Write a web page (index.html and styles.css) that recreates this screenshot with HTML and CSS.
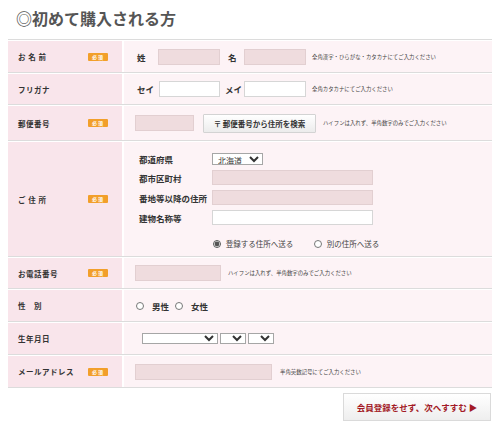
FILE: index.html
```html
<!DOCTYPE html>
<html lang="ja">
<head>
<meta charset="utf-8">
<link rel="stylesheet" href="styles.css">
</head>
<body>
<div class="page">
  <h1 class="title">◎初めて購入される方</h1>
  <div class="form">
    <div class="row h31">
      <div class="lab"><span class="lt">お 名 前</span><span class="req">必須</span></div>
      <div class="val">
        <span class="fl fa">姓</span><input class="inp pink w62" type="text">
        <span class="fl fb">名</span><input class="inp pink w62" type="text">
        <span class="note n6">全角漢字・ひらがな・カタカナにてご入力ください</span>
      </div>
    </div>
    <div class="row h30">
      <div class="lab"><span class="lt">フリガナ</span></div>
      <div class="val">
        <span class="fl fc">セイ</span><input class="inp white w61" type="text">
        <span class="fl fd">メイ</span><input class="inp white w62" type="text">
        <span class="note n6">全角カタカナにてご入力ください</span>
      </div>
    </div>
    <div class="row h34">
      <div class="lab"><span class="lt">郵便番号</span><span class="req">必須</span></div>
      <div class="val">
        <input class="inp pink w59" type="text">
        <button class="zip" type="button">〒 郵便番号から住所を検索</button>
        <span class="note n7">ハイフンは入れず、半角数字のみでご入力ください</span>
      </div>
    </div>
    <div class="row h114">
      <div class="lab"><span class="lt">ご 住 所</span><span class="req">必須</span></div>
      <div class="val addr">
        <div class="agrid">
          <span class="al">都道府県</span>
          <select class="sel pref"><option>北海道</option></select>
          <span class="al">都市区町村</span>
          <input class="inp pink w161" type="text">
          <span class="al">番地等以降の住所</span>
          <input class="inp pink w161" type="text">
          <span class="al">建物名称等</span>
          <input class="inp white w161" type="text">
          <span></span>
          <div class="send">
            <label class="rl"><input type="radio" name="send" checked> 登録する住所へ送る</label>
            <label class="rl rl2"><input type="radio" name="send"> 別の住所へ送る</label>
          </div>
        </div>
      </div>
    </div>
    <div class="row h30">
      <div class="lab"><span class="lt">お電話番号</span><span class="req">必須</span></div>
      <div class="val">
        <input class="inp pink w86" type="text">
        <span class="note n7">ハイフンは入れず、半角数字のみでご入力ください</span>
      </div>
    </div>
    <div class="row h31">
      <div class="lab"><span class="lt">性　別</span></div>
      <div class="val gender">
        <label class="gl"><input type="radio" name="sex">男性</label>
        <label class="gl gl2"><input type="radio" name="sex">女性</label>
      </div>
    </div>
    <div class="row h31">
      <div class="lab"><span class="lt">生年月日</span></div>
      <div class="val birth">
        <select class="sel y"><option></option></select>
        <select class="sel md"><option></option></select>
        <select class="sel md"><option></option></select>
      </div>
    </div>
    <div class="row h31">
      <div class="lab"><span class="lt">メールアドレス</span><span class="req">必須</span></div>
      <div class="val">
        <input class="inp pink w137" type="text">
        <span class="note n8">半角英数記号にてご入力ください</span>
      </div>
    </div>
  </div>
  <div class="actions">
    <button class="next" type="button">会員登録をせず、次へすすむ ▶</button>
  </div>
</div>
</body>
</html>
```

FILE: styles.css
```css
* { box-sizing: border-box; }
body {
  margin: 0;
  background: #fff;
  color: #333;
  font-family: "Noto Sans CJK JP", "Noto Sans", sans-serif;
}
.page { padding: 8px; }
.title {
  margin: 0 0 11px 8px;
  font-size: 16px;
  line-height: 20px;
  font-weight: bold;
  color: #555;
}
.form { border-top: 1px solid #dcdcdc; }
.row {
  display: grid;
  grid-template-columns: 114px 1fr;
  column-gap: 2px;
  padding-top: 1px;
  border-bottom: 1px solid #dcdcdc;
}
.h30 { height: 32px; }
.h31 { height: 33px; }
.h34 { height: 36px; }
.h114 { height: 116px; }
.lab {
  background: #f9e5eb;
  display: flex;
  align-items: center;
  padding-left: 10px;
}
.lt {
  width: 70px;
  font-size: 7.5px;
  font-weight: bold;
  letter-spacing: 0.5px;
  color: #333;
  white-space: pre;
}
.req {
  width: 20px;
  height: 8px;
  background: #f29f2a;
  color: #fff;
  font-size: 5px;
  line-height: 8px;
  font-weight: bold;
  text-align: center;
  letter-spacing: 1px;
  border-radius: 1px;
}
.val {
  background: #fdf3f6;
  display: flex;
  align-items: center;
  padding-left: 11px;
}
.fl {
  font-size: 8.5px;
  font-weight: bold;
  color: #333;
}
.fa { margin-left: 2px; width: 21px; }
.fb { margin-left: 8px; width: 16px; }
.fc { margin-left: 2px; width: 22px; }
.fd { margin-left: 5px; width: 19px; }
.inp {
  height: 16px;
  border: 1px solid #e2cfd1;
  padding: 0;
  margin: 0;
  font-size: 8px;
}
.pink { background: #efdcde; }
.white { background: #fff; border-color: #d6d6d6; }
.w59 { width: 59px; }
.w61 { width: 61px; }
.w62 { width: 62px; }
.w86 { width: 86px; }
.w137 { width: 137px; }
.w161 { width: 161px; height: 15px; }
.note {
  font-size: 5.4px;
  color: #444;
  white-space: nowrap;
}
.n6 { margin-left: 6px; }
.n7 { margin-left: 7px; }
.n8 { margin-left: 8px; }
.zip {
  margin: 0 0 0 9px;
  width: 113px;
  height: 19px;
  padding: 0;
  border: 1px solid #d3d3d3;
  border-radius: 1px;
  background: linear-gradient(#ffffff, #ececec);
  font-family: inherit;
  font-size: 7.5px;
  font-weight: bold;
  color: #333;
}
.addr {
  align-items: flex-start;
  padding: 11px 0 0 15px;
}
.agrid {
  display: grid;
  grid-template-columns: 73px auto;
  row-gap: 5px;
  align-items: center;
}
.al {
  font-size: 8.5px;
  font-weight: bold;
  color: #333;
  white-space: nowrap;
}
.sel {
  height: 12px;
  padding: 0 0 0 1px;
  margin: 0;
  border: 1px solid #a6a6a6;
  border-radius: 0;
  background: #fff;
  font-family: inherit;
  font-size: 7.5px;
  color: #333;
}
.pref { width: 51px; font-size: 8px; }
.send {
  display: flex;
  align-items: center;
  margin-top: 8px;
}
.rl {
  display: flex;
  align-items: center;
  font-size: 7.5px;
  color: #444;
  white-space: pre;
}
.rl2 { margin-left: 20px; }
input[type="radio"] {
  width: 8px;
  height: 8px;
  margin: 0 3px 0 1px;
  accent-color: #555;
}
.gender { padding-left: 12px; }
.gl {
  display: flex;
  align-items: center;
  font-size: 8.5px;
  font-weight: bold;
  color: #333;
}
.gl input[type="radio"] { margin: 0 8px 0 0; }
.gl2 { margin-left: 6px; }
.birth { padding-left: 18px; gap: 2px; }
.birth .sel { height: 11px; }
.y { width: 76px; }
.md { width: 26px; }
.actions {
  display: flex;
  justify-content: flex-end;
  margin-top: 5px;
  padding-right: 1px;
}
.next {
  width: 148px;
  height: 28px;
  padding: 0;
  margin: 0;
  border: 1px solid #dadada;
  background: linear-gradient(#ffffff, #eeeeee);
  font-family: inherit;
  font-size: 8.5px;
  font-weight: bold;
  color: #a31a26;
}
```
